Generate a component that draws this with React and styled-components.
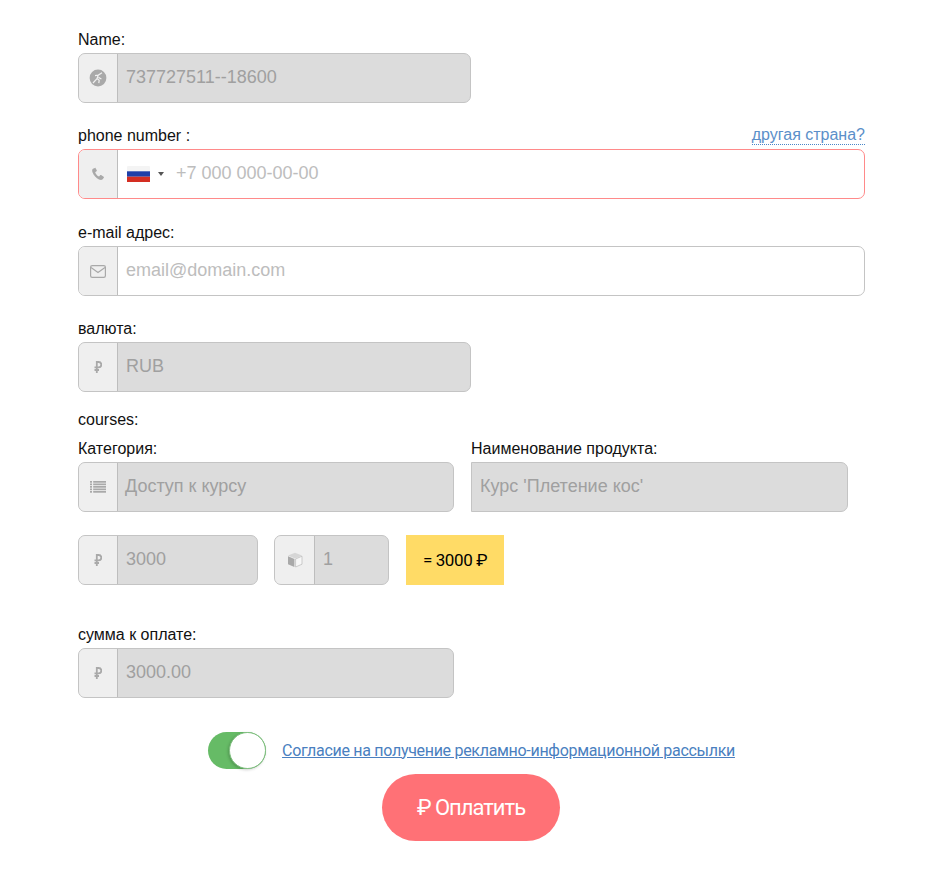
import React from "react";
import styled, { createGlobalStyle } from "styled-components";

const Global = createGlobalStyle`
  html, body { margin: 0; padding: 0; background: #fff; }
  body { font-family: "Liberation Sans", Arial, sans-serif; color: #000; }
`;

const Page = styled.div`
  width: 926px;
  height: 877px;
  box-sizing: border-box;
  padding: 30px 61px 0 78px;
`;
const Block = styled.div`
  margin-bottom: ${(p) => p.$mb ?? 0}px;
  width: ${(p) => (p.$w ? `${p.$w}px` : "auto")};
`;
const LabelRow = styled.div`
  display: flex;
  justify-content: space-between;
  align-items: flex-end;
  height: 19px;
  margin-bottom: ${(p) => p.$mb ?? 4}px;
`;
const Label = styled.label`
  font-size: 16px;
  line-height: 19px;
  color: #111;
`;
const OtherCountry = styled.a`
  font-size: 16px;
  line-height: 18px;
  color: #5b8fc9;
  border-bottom: 1px dotted #4a86c8;
  margin-bottom: 0;
`;
const Field = styled.div`
  display: flex;
  box-sizing: border-box;
  height: 50px;
  width: ${(p) => (p.$w ? `${p.$w}px` : "100%")};
  border: 1px solid ${(p) => (p.$error ? "#ff8a8a" : "#c4c4c4")};
  border-radius: ${(p) => (p.$squareLeft ? "0 7px 7px 0" : "7px")};
  background: ${(p) => (p.$disabled ? "#dcdcdc" : "#fff")};
  overflow: hidden;
`;
const Addon = styled.div`
  flex: 0 0 ${(p) => p.$w ?? 38}px;
  display: flex;
  align-items: center;
  justify-content: center;
  background: #efefef;
  border-right: 1px solid #bdbdbd;
  color: #a9a9a9;
`;
const Value = styled.div`
  flex: 1;
  display: flex;
  align-items: center;
  padding-left: ${(p) => p.$pl ?? 8}px;
  padding-bottom: 1px;
  font-size: 18px;
  color: ${(p) => (p.$disabled ? "#a0a0a0" : "#bdbdbd")};
  white-space: nowrap;
`;
const Flag = styled.svg`
  margin-left: 9px;
  align-self: center;
  flex: none;
`;
const Caret = styled.div`
  width: 0;
  height: 0;
  margin: 0 0 0 8px;
  align-self: center;
  flex: none;
  border-left: 3px solid transparent;
  border-right: 3px solid transparent;
  border-top: 4px solid #555;
`;
const TwoCols = styled.div`
  display: flex;
  gap: 17px;
  margin-bottom: 23px;
`;
const PriceRow = styled.div`
  display: flex;
  align-items: stretch;
  margin-bottom: 40px;
`;
const Total = styled.div`
  width: 98px;
  height: 50px;
  background: #ffdb66;
  margin-left: 17px;
  display: flex;
  align-items: center;
  justify-content: center;
  font-family: Roboto, sans-serif;
  font-size: 17px;
  letter-spacing: -0.4px;
  color: #000;
`;
const Spacer = styled.div`
  width: 16px;
`;
const ConsentRow = styled.div`
  display: flex;
  justify-content: center;
  align-items: center;
  margin-top: 34px;
  gap: 16px;
`;
const Toggle = styled.div`
  position: relative;
  box-sizing: border-box;
  width: 58px;
  height: 37px;
  border-radius: 19px;
  background: #66bb66;
`;
const Knob = styled.div`
  position: absolute;
  top: 0;
  right: 0;
  box-sizing: border-box;
  width: 37px;
  height: 37px;
  border-radius: 50%;
  background: #fff;
  border: 1px solid #7fbf7f;
  box-shadow: -1px 1px 3px rgba(0, 0, 0, 0.2);
`;
const ConsentLink = styled.a`
  font-family: Roboto, sans-serif;
  font-size: 16px;
  line-height: 20px;
  letter-spacing: -0.3px;
  color: #4a7fc0;
  text-decoration: underline;
  white-space: nowrap;
`;
const PayRow = styled.div`
  display: flex;
  justify-content: center;
  margin-top: 5px;
`;
const PayButton = styled.button`
  width: 178px;
  height: 67px;
  border: 0;
  border-radius: 34px;
  background: #ff7176;
  color: #fff;
  font-family: Roboto, sans-serif;
  font-size: 22px;
  letter-spacing: -1px;
  padding: 0;
  margin-right: 1px;
`;

const Rub = () => (
  <svg width="8" height="12" viewBox="0 0 8 12" fill="none" stroke="currentColor" strokeWidth="1.8">
    <path d="M2.8 12V1h1.8a2.5 2.5 0 0 1 0 5.4H.5M.5 9h4.5" />
  </svg>
);
const Runner = () => (
  <svg width="18" height="18" viewBox="0 0 18 18">
    <circle cx="9" cy="9" r="8.4" fill="#a9a9a9" />
    <path d="M4 14 8 9.6l1.2-3.4 3.8-2.4M9.4 8.4l3 1.6M8 9.6l2.2 1.6-.4 3M6 6.6l3.2-.4" stroke="#efefef" strokeWidth="1.2" fill="none" />
  </svg>
);
const Phone = () => (
  <svg width="14" height="14" viewBox="0 0 24 24" fill="#a9a9a9">
    <path d="M6.6 1.5 3.4 3C1.8 3.9 1.6 6.4 2.7 9.3c1.5 4 6.4 10 11 12.1 2.6 1.2 4.8 1.2 6.3-.4l2-2.5c.4-.6.3-1.2-.3-1.6l-4.4-3c-.6-.4-1.2-.3-1.7.2l-1.4 1.6c-.4.4-.9.5-1.4.2-2.4-1.4-4.3-3.7-5.4-6.2-.2-.5-.1-1 .3-1.3l1.8-1.2c.6-.4.7-1 .4-1.6L7.9 2c-.3-.6-.8-.8-1.3-.5Z" />
  </svg>
);
const Mail = () => (
  <svg width="16" height="13" viewBox="0 0 16 13" fill="none" stroke="#a9a9a9" strokeWidth="1.2">
    <rect x="0.6" y="0.6" width="14.8" height="11.8" rx="1.6" />
    <path d="M1 2.6 8 7.6l7-5" />
  </svg>
);
const ListIcon = () => (
  <svg width="16" height="12" viewBox="0 0 16 12" fill="#a9a9a9">
    {[0, 2.5, 5, 7.5, 10].map((y) => (
      <g key={y}>
        <rect x="0" y={y} width="2" height="1.7" />
        <rect x="3.2" y={y} width="12.8" height="1.7" />
      </g>
    ))}
  </svg>
);
const Cube = () => (
  <svg width="16" height="16" viewBox="0 0 16 16">
    <path d="M8 .8 15 3.6 8 6.4 1 3.6Z" fill="#d6d6d6" />
    <path d="M1 4.2 7.4 7V15L1 12.2Z" fill="#a9a9a9" />
    <path d="M15 4.2 8.6 7v8l6.4-2.8Z" fill="#f7f7f7" stroke="#b0b0b0" strokeWidth=".6" />
  </svg>
);

const Input = ({ icon, children, w, disabled, error, addon, pl }) => (
  <Field $w={w} $disabled={disabled} $error={error}>
    <Addon $w={addon}>{icon}</Addon>
    <Value $disabled={disabled} $pl={pl}>{children}</Value>
  </Field>
);

export default function App() {
  return (
    <Page>
      <Global />
      <Block $mb={23}>
        <LabelRow><Label>Name:</Label></LabelRow>
        <Input w={393} disabled icon={<Runner />}>737727511--18600</Input>
      </Block>
      <Block $mb={24}>
        <LabelRow>
          <Label>phone number :</Label>
          <OtherCountry>другая страна?</OtherCountry>
        </LabelRow>
        <Field $error>
          <Addon><Phone /></Addon>
          <Flag width="23" height="16" viewBox="0 0 23 16">
            <rect width="23" height="16" rx="1" fill="#f4f4f4" />
            <rect y="5.3" width="23" height="5.4" fill="#1f3fa8" />
            <rect y="10.7" width="23" height="5.3" fill="#d42e22" />
          </Flag>
          <Caret />
          <Value $pl={12}>+7 000 000-00-00</Value>
        </Field>
      </Block>
      <Block $mb={23}>
        <LabelRow><Label>e-mail адрес:</Label></LabelRow>
        <Input icon={<Mail />}>email@domain.com</Input>
      </Block>
      <Block $mb={18}>
        <LabelRow><Label>валюта:</Label></LabelRow>
        <Input w={393} disabled icon={<Rub />}>RUB</Input>
      </Block>
      <LabelRow $mb={10}><Label>courses:</Label></LabelRow>
      <TwoCols>
        <Block $w={376}>
          <LabelRow><Label>Категория:</Label></LabelRow>
          <Input w={376} pl={7} disabled icon={<ListIcon />}>Доступ к курсу</Input>
        </Block>
        <Block $w={377}>
          <LabelRow><Label>Наименование продукта:</Label></LabelRow>
          <Field $w={377} $disabled $squareLeft>
            <Value $disabled>Курс 'Плетение кос'</Value>
          </Field>
        </Block>
      </TwoCols>
      <PriceRow>
        <Input w={180} disabled icon={<Rub />}>3000</Input>
        <Spacer />
        <Input w={115} addon={39} disabled icon={<Cube />}>1</Input>
        <Total>= 3000 ₽</Total>
      </PriceRow>
      <Block>
        <LabelRow><Label>сумма к оплате:</Label></LabelRow>
        <Input w={376} disabled icon={<Rub />}>3000.00</Input>
      </Block>
      <ConsentRow>
        <Toggle><Knob /></Toggle>
        <ConsentLink>Согласие на получение рекламно-информационной рассылки</ConsentLink>
      </ConsentRow>
      <PayRow><PayButton>₽ Оплатить</PayButton></PayRow>
    </Page>
  );
}
